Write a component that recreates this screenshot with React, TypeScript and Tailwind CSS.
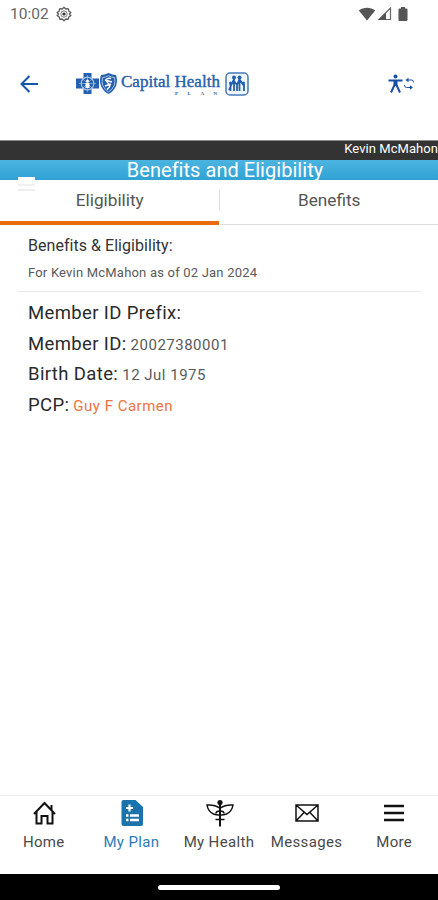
import { useState } from "react"
import type { ReactNode } from "react"

type Tab = "Eligibility" | "Benefits"

type NavItem = {
  label: string
  icon: ReactNode
}

const details = [
  { label: "Member ID Prefix:", value: "" },
  { label: "Member ID:", value: "20027380001" },
  { label: "Birth Date:", value: "12 Jul 1975" },
  { label: "PCP:", value: "Guy F Carmen", link: true },
]

const navItems: NavItem[] = [
  { label: "Home", icon: <HomeIcon /> },
  { label: "My Plan", icon: <PlanIcon /> },
  { label: "My Health", icon: <HealthIcon /> },
  { label: "Messages", icon: <MessagesIcon /> },
  { label: "More", icon: <MoreIcon /> },
]

export default function App() {
  const [tab, setTab] = useState<Tab>("Eligibility")
  const [active, setActive] = useState("My Plan")

  return (
    <div className="flex h-[900px] w-[438px] flex-col overflow-hidden bg-white font-[Roboto,sans-serif]">
      <StatusBar />
      <Header />

      <div className="flex h-[20px] justify-end border-t border-[#8a8a8a] bg-[#333333] text-[13px] leading-[15px] tracking-[0.06px] text-white">
        <span className="whitespace-nowrap">Kevin McMahon</span>
      </div>

      {/* Page title */}
      <div className="relative h-[20px] bg-linear-to-b from-[#4bb4e0] to-[#2fa2d4] pl-[12px] text-center">
        <h1 className="text-[20px] leading-[20px] tracking-[0.04px] text-white">Benefits and Eligibility</h1>
        <div className="absolute top-[17px] left-[18px] flex flex-col gap-[3.5px]">
          <span className="h-[3px] w-[17px] bg-white" />
          <span className="h-[2px] w-[17px] bg-[#f0f0f0]" />
          <span className="h-[2px] w-[17px] bg-[#ededed]" />
        </div>
      </div>

      {/* Tabs */}
      <div className="flex h-[45px]">
        <TabButton label="Eligibility" selected={tab === "Eligibility"} onClick={() => setTab("Eligibility")} />
        <div className="mt-[10px] h-[20px] w-px bg-[#dedede]" />
        <TabButton label="Benefits" selected={tab === "Benefits"} onClick={() => setTab("Benefits")} />
      </div>

      <main className="flex-1">
        <div className="mx-[17px] h-[67px] border-b border-[#e8e8e8] pt-[11px] pl-[11px]">
          <h2 className="text-[16px] leading-[20px] tracking-[0.04px] text-[#333333]">Benefits &amp; Eligibility:</h2>
          <p className="mt-[8px] text-[13px] leading-[18px] tracking-[0.2px] text-[#5a5a5a]">
            For Kevin McMahon as of 02 Jan 2024
          </p>
        </div>
        <dl className="pt-[6px] pl-[28px]">
          {details.map((item) => (
            <div key={item.label} className="flex h-[30.7px] items-baseline gap-[4px] leading-[30px]">
              <dt className="text-[18.5px] tracking-[0.37px] text-[#2a2a2a]">{item.label}</dt>
              <dd className={`text-[15px] tracking-[0.5px] ${item.link ? "text-[#ed7440]" : "text-[#5a5a5a]"}`}>
                {item.value}
              </dd>
            </div>
          ))}
        </dl>
      </main>

      {/* Bottom navigation */}
      <nav className="flex h-[79px] border-t border-[#ececec] pt-[2px]">
        {navItems.map((item) => (
          <button
            key={item.label}
            onClick={() => setActive(item.label)}
            className={`flex flex-1 flex-col items-center ${active === item.label ? "text-[#1a73ad]" : "text-[#111111]"}`}
          >
            <span className="flex h-[30px] items-center">{item.icon}</span>
            <span
              className={`mt-[4px] text-[15px] leading-[20px] tracking-[0.35px] whitespace-nowrap ${
                active === item.label ? "text-[#2b7db8]" : "text-[#4a4a4a]"
              }`}
            >
              {item.label}
            </span>
          </button>
        ))}
      </nav>

      <div className="flex h-[26px] items-center justify-center bg-black">
        <div className="h-[5px] w-[122px] rounded-full bg-white" />
      </div>
    </div>
  )
}

function TabButton({ label, selected, onClick }: { label: string; selected: boolean; onClick: () => void }) {
  return (
    <button
      onClick={onClick}
      className="flex flex-1 flex-col items-center justify-between pt-[9px] text-[17.2px] leading-[22px] text-[#555555]"
    >
      <span className="pl-px">{label}</span>
      <span className={`w-full ${selected ? "h-[4px] bg-[#e86c0a]" : "h-px bg-[#dddddd]"}`} />
    </button>
  )
}

function StatusBar() {
  return (
    <div className="flex h-[28px] items-center justify-between pr-[30px] pl-[10px]">
      <div className="flex items-center gap-[7px]">
        <span className="text-[15.5px] leading-[20px] text-[#666666]">10:02</span>
        <svg width="16" height="16" viewBox="0 0 16 16" fill="none" stroke="#5c5c5c">
          <path
            d="M6.300 3 8 1.200 9.700 3l2.500-.3.700 2.400 2 1.400L13.500 8l1.400 1.500-2 1.400-.7 2.400-2.500-.3L8 14.800 6.300 13l-2.500.3-.7-2.400-2-1.400L2.500 8 1.100 6.500l2-1.400.7-2.400Z"
            strokeWidth="1.300"
            strokeLinejoin="round"
          />
          <circle cx="8" cy="8" r="3.200" strokeWidth=".8" />
          <circle cx="8" cy="8" r="1.600" fill="#333333" stroke="none" />
        </svg>
      </div>
      <div className="flex items-center">
        <svg width="18" height="14" viewBox="0 0 18 14" fill="#555555">
          <path d="M.8 3.500C5.500-.3 12.500-.3 17.200 3.500L9 13.500Z" />
        </svg>
        <svg className="ml-[1px]" width="15" height="14" viewBox="0 0 15 14">
          <path d="M2 12.500 13.500 1v11.500Z" fill="none" stroke="#666666" strokeWidth="1.200" />
          <path d="M1.500 13 9 5.500V13Z" fill="#555555" />
        </svg>
        <svg className="ml-[6px]" width="10" height="14" viewBox="0 0 10 14" fill="#555555">
          <path d="M3 0h4v1.500h1.500q1 0 1 1V13q0 1-1 1h-7q-1 0-1-1V2.500q0-1 1-1H3Z" />
        </svg>
      </div>
    </div>
  )
}

function Header() {
  return (
    <header className="flex h-[112px] items-center pl-[20px]">
      <svg width="19" height="18" viewBox="0 0 19 18" fill="none" stroke="#1656a8" strokeWidth="2">
        <path d="M18 9H2M9.500 1 1.500 9l8 8" />
      </svg>
      <Logo />
      <AccessibilityIcon />
    </header>
  )
}

function Logo() {
  return (
    <div className="mb-[1px] ml-[37px] flex h-[26px] w-[173px] items-center text-[#2460ad]">
      <svg className="shrink-0" width="44" height="24" viewBox="0 0 44 24">
        {/* cross */}
        <path d="M7.500 1h8v5.500H23v10h-7.500V22h-8v-5.500H0v-10h7.500Z" fill="#2460ad" />
        <circle cx="11.500" cy="11.500" r="6.300" fill="none" stroke="#a9c5e6" strokeWidth="1.200" />
        <path d="M11.500 3v17M3 11.500h17M5.500 5.500l12 12M17.500 5.500l-12 12" stroke="#a9c5e6" strokeWidth=".6" />
        <circle cx="11.500" cy="9" r="1.500" fill="#ffffff" />
        <path d="M9.500 11h4v5h-4Z" fill="#ffffff" />
        {/* shield */}
        <path d="M25 3q3.500 0 7.500-2 4 2 7.500 2 2 6 0 11-2 5-7.500 8-5.500-3-7.500-8-2-5 0-11Z" fill="#2460ad" />
        <path d="M26.500 5.500q3 0 6-1.800 3 1.800 6 1.800 1 4.500-.3 8-1.700 4-5.700 6.500-4-2.500-5.700-6.500-1.300-3.500-.3-8Z" fill="none" stroke="#a9c5e6" />
        <path d="M35 6.500c-5-1-6 2-3 4.500s2 4-1 6.500M29 8l7 2M29 14l6-2" fill="none" stroke="#ffffff" strokeWidth="1.400" />
      </svg>
      <div className="ml-[1px] w-[100px] shrink-0 font-[Liberation_Serif,serif] whitespace-nowrap">
        <div className="text-[17px] leading-[19px] tracking-[0.02px] [-webkit-text-stroke:0.4px_#2460ad]">Capital Health</div>
        <div className="ml-[54px] text-[5px] leading-[5px] font-bold tracking-[9.5px]">PLAN</div>
      </div>
      <svg className="ml-[4px] shrink-0" width="24" height="24" viewBox="0 0 24 24">
        <rect x="1" y="1" width="22" height="22" rx="4" fill="#eff6fd" stroke="#4479bb" strokeWidth="1.500" />
        <g fill="#2460ad">
          <circle cx="9" cy="5.500" r="2" />
          <circle cx="14.500" cy="5.500" r="2" />
          <circle cx="5.500" cy="11" r="1.500" />
          <circle cx="18.500" cy="11" r="1.500" />
        </g>
        <path
          d="M9 7 4 18M9 7v12M9 9l3 4v6M14.500 7 12 13M14.500 7v12M15 8l4 6v5M5.500 12v7M19 12v7"
          fill="none"
          stroke="#2460ad"
          strokeWidth="1.800"
        />
      </svg>
    </div>
  )
}

function AccessibilityIcon() {
  return (
    <svg className="ml-[139px]" width="27" height="20" viewBox="0 0 27 20" fill="none" stroke="#174ea6">
      <circle cx="7.500" cy="2.500" r="2" fill="#174ea6" stroke="none" />
      <path d="M.5 6.500h14" strokeWidth="2" />
      <path d="M5.500 6h4v6h-4Z" fill="#174ea6" stroke="none" />
      <path d="M6.500 11 3 18.500M8.500 11l3.500 7.500" strokeWidth="2" />
      <path d="M25.500 8.500q0-2.500-2-2.500h-4M16.500 11q0 2.500 2 2.500h4" strokeWidth="1" />
      <path d="M20.500 3.800 17.500 6l3 2.200ZM22 11.300l3 2.200-3 2.200Z" fill="#174ea6" stroke="none" />
    </svg>
  )
}

function HomeIcon() {
  return (
    <svg className="ml-[2px]" width="23" height="24" viewBox="0 0 23 24" fill="none" stroke="currentColor" strokeWidth="2">
      <path d="M1 13 11.500 2 22 13M3.500 11V22.500h5V15h6v7.500h5V11M18.500 9V4" />
    </svg>
  )
}

function PlanIcon() {
  return (
    <svg className="ml-[2px]" width="22" height="28" viewBox="0 0 22 28" fill="currentColor">
      <path d="M2.500 1h12L22 8v17q0 2-2 2H2.500q-2 0-2-2V3q0-2 2-2Z" />
      <path d="M8.500 5.500v7M5 9h7" stroke="#ffffff" strokeWidth="2.200" />
      <path d="M5 16.500h2.500M9 16.500h9M5 21h2.500M9 21h9" stroke="#ffffff" strokeWidth="2.600" />
    </svg>
  )
}

function HealthIcon() {
  return (
    <svg className="ml-[2px]" width="28" height="28" viewBox="0 0 28 28" fill="none" stroke="currentColor" strokeWidth="1.500">
      <path d="M14 2v25.500" strokeWidth="2" />
      <circle cx="14" cy="3.500" r="2.600" fill="currentColor" stroke="none" />
      <path d="M13.500 9Q9 5.500 1 6q1 6.500 6.500 9 3 1.200 6.500 1M14.500 9Q19 5.500 27 6q-1 6.500-6.500 9-3 1.200-6.500 1" />
      <path d="M14 12q-4 0-4 2.500M14 12q4 0 4 2.500M9.500 20.500h9" strokeWidth="1.700" />
    </svg>
  )
}

function MessagesIcon() {
  return (
    <svg width="24" height="18" viewBox="0 0 24 18" fill="none" stroke="currentColor" strokeWidth="1.500">
      <path d="M1 1h22v16H1ZM1 1l11 9.500L23 1M1 17l8-8.500M23 17l-8-8.500" />
    </svg>
  )
}

function MoreIcon() {
  return (
    <svg width="22" height="18" viewBox="0 0 22 18" stroke="currentColor" strokeWidth="2.500">
      <path d="M1 2h20M1 9h20M1 16h20" />
    </svg>
  )
}
